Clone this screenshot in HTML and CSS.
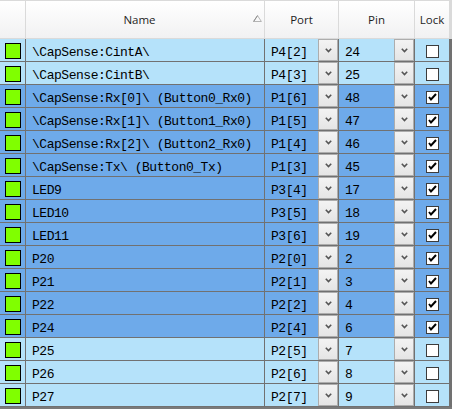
FILE: index.html
```html
<!DOCTYPE html>
<html>
<head>
<meta charset="utf-8">
<link rel="stylesheet" href="styles.css">
</head>
<body>
<div class="table">
  <div class="hdr">
    <div class="hc"></div>
    <div class="hc name"><span class="hl">Name</span><svg class="sort" width="9" height="7" viewBox="0 0 9 7"><polygon points="4.5,0.6 8.4,6.5 0.6,6.5" fill="none" stroke="#b4b4b4" stroke-width="1"/><line x1="4.5" y1="0.6" x2="0.6" y2="6.5" stroke="#8c8c8c" stroke-width="1"/></svg></div>
    <div class="hc">Port</div>
    <div class="hc">Pin</div>
    <div class="hc">Lock</div>
  </div>

  <div class="row light"><div class="c"><div class="sw"></div></div><div class="c nm">\CapSense:CintA\</div><div class="c sel"><span class="val">P4[2]</span><span class="dd"><svg width="7" height="5" viewBox="0 0 7 5"><polyline points="0.8,0.8 3.5,3.6 6.2,0.8" fill="none" stroke="#555" stroke-width="1.6"/></svg></span></div><div class="c sel"><span class="val">24</span><span class="dd"><svg width="7" height="5" viewBox="0 0 7 5"><polyline points="0.8,0.8 3.5,3.6 6.2,0.8" fill="none" stroke="#555" stroke-width="1.6"/></svg></span></div><div class="c lk"><span class="cb"></span></div></div>

  <div class="row light"><div class="c"><div class="sw"></div></div><div class="c nm">\CapSense:CintB\</div><div class="c sel"><span class="val">P4[3]</span><span class="dd"><svg width="7" height="5" viewBox="0 0 7 5"><polyline points="0.8,0.8 3.5,3.6 6.2,0.8" fill="none" stroke="#555" stroke-width="1.6"/></svg></span></div><div class="c sel"><span class="val">25</span><span class="dd"><svg width="7" height="5" viewBox="0 0 7 5"><polyline points="0.8,0.8 3.5,3.6 6.2,0.8" fill="none" stroke="#555" stroke-width="1.6"/></svg></span></div><div class="c lk"><span class="cb"></span></div></div>

  <div class="row dark"><div class="c"><div class="sw"></div></div><div class="c nm">\CapSense:Rx[0]\ (Button0_Rx0)</div><div class="c sel"><span class="val">P1[6]</span><span class="dd"><svg width="7" height="5" viewBox="0 0 7 5"><polyline points="0.8,0.8 3.5,3.6 6.2,0.8" fill="none" stroke="#555" stroke-width="1.6"/></svg></span></div><div class="c sel"><span class="val">48</span><span class="dd"><svg width="7" height="5" viewBox="0 0 7 5"><polyline points="0.8,0.8 3.5,3.6 6.2,0.8" fill="none" stroke="#555" stroke-width="1.6"/></svg></span></div><div class="c lk"><span class="cb"><svg width="11" height="11" viewBox="0 0 11 11"><polyline points="2,5 4,7.5 9,2" fill="none" stroke="#000" stroke-width="2"/></svg></span></div></div>

  <div class="row dark"><div class="c"><div class="sw"></div></div><div class="c nm">\CapSense:Rx[1]\ (Button1_Rx0)</div><div class="c sel"><span class="val">P1[5]</span><span class="dd"><svg width="7" height="5" viewBox="0 0 7 5"><polyline points="0.8,0.8 3.5,3.6 6.2,0.8" fill="none" stroke="#555" stroke-width="1.6"/></svg></span></div><div class="c sel"><span class="val">47</span><span class="dd"><svg width="7" height="5" viewBox="0 0 7 5"><polyline points="0.8,0.8 3.5,3.6 6.2,0.8" fill="none" stroke="#555" stroke-width="1.6"/></svg></span></div><div class="c lk"><span class="cb"><svg width="11" height="11" viewBox="0 0 11 11"><polyline points="2,5 4,7.5 9,2" fill="none" stroke="#000" stroke-width="2"/></svg></span></div></div>

  <div class="row dark"><div class="c"><div class="sw"></div></div><div class="c nm">\CapSense:Rx[2]\ (Button2_Rx0)</div><div class="c sel"><span class="val">P1[4]</span><span class="dd"><svg width="7" height="5" viewBox="0 0 7 5"><polyline points="0.8,0.8 3.5,3.6 6.2,0.8" fill="none" stroke="#555" stroke-width="1.6"/></svg></span></div><div class="c sel"><span class="val">46</span><span class="dd"><svg width="7" height="5" viewBox="0 0 7 5"><polyline points="0.8,0.8 3.5,3.6 6.2,0.8" fill="none" stroke="#555" stroke-width="1.6"/></svg></span></div><div class="c lk"><span class="cb"><svg width="11" height="11" viewBox="0 0 11 11"><polyline points="2,5 4,7.5 9,2" fill="none" stroke="#000" stroke-width="2"/></svg></span></div></div>

  <div class="row dark"><div class="c"><div class="sw"></div></div><div class="c nm">\CapSense:Tx\ (Button0_Tx)</div><div class="c sel"><span class="val">P1[3]</span><span class="dd"><svg width="7" height="5" viewBox="0 0 7 5"><polyline points="0.8,0.8 3.5,3.6 6.2,0.8" fill="none" stroke="#555" stroke-width="1.6"/></svg></span></div><div class="c sel"><span class="val">45</span><span class="dd"><svg width="7" height="5" viewBox="0 0 7 5"><polyline points="0.8,0.8 3.5,3.6 6.2,0.8" fill="none" stroke="#555" stroke-width="1.6"/></svg></span></div><div class="c lk"><span class="cb"><svg width="11" height="11" viewBox="0 0 11 11"><polyline points="2,5 4,7.5 9,2" fill="none" stroke="#000" stroke-width="2"/></svg></span></div></div>

  <div class="row dark"><div class="c"><div class="sw"></div></div><div class="c nm">LED9</div><div class="c sel"><span class="val">P3[4]</span><span class="dd"><svg width="7" height="5" viewBox="0 0 7 5"><polyline points="0.8,0.8 3.5,3.6 6.2,0.8" fill="none" stroke="#555" stroke-width="1.6"/></svg></span></div><div class="c sel"><span class="val">17</span><span class="dd"><svg width="7" height="5" viewBox="0 0 7 5"><polyline points="0.8,0.8 3.5,3.6 6.2,0.8" fill="none" stroke="#555" stroke-width="1.6"/></svg></span></div><div class="c lk"><span class="cb"><svg width="11" height="11" viewBox="0 0 11 11"><polyline points="2,5 4,7.5 9,2" fill="none" stroke="#000" stroke-width="2"/></svg></span></div></div>

  <div class="row dark"><div class="c"><div class="sw"></div></div><div class="c nm">LED10</div><div class="c sel"><span class="val">P3[5]</span><span class="dd"><svg width="7" height="5" viewBox="0 0 7 5"><polyline points="0.8,0.8 3.5,3.6 6.2,0.8" fill="none" stroke="#555" stroke-width="1.6"/></svg></span></div><div class="c sel"><span class="val">18</span><span class="dd"><svg width="7" height="5" viewBox="0 0 7 5"><polyline points="0.8,0.8 3.5,3.6 6.2,0.8" fill="none" stroke="#555" stroke-width="1.6"/></svg></span></div><div class="c lk"><span class="cb"><svg width="11" height="11" viewBox="0 0 11 11"><polyline points="2,5 4,7.5 9,2" fill="none" stroke="#000" stroke-width="2"/></svg></span></div></div>

  <div class="row dark"><div class="c"><div class="sw"></div></div><div class="c nm">LED11</div><div class="c sel"><span class="val">P3[6]</span><span class="dd"><svg width="7" height="5" viewBox="0 0 7 5"><polyline points="0.8,0.8 3.5,3.6 6.2,0.8" fill="none" stroke="#555" stroke-width="1.6"/></svg></span></div><div class="c sel"><span class="val">19</span><span class="dd"><svg width="7" height="5" viewBox="0 0 7 5"><polyline points="0.8,0.8 3.5,3.6 6.2,0.8" fill="none" stroke="#555" stroke-width="1.6"/></svg></span></div><div class="c lk"><span class="cb"><svg width="11" height="11" viewBox="0 0 11 11"><polyline points="2,5 4,7.5 9,2" fill="none" stroke="#000" stroke-width="2"/></svg></span></div></div>

  <div class="row dark"><div class="c"><div class="sw"></div></div><div class="c nm">P20</div><div class="c sel"><span class="val">P2[0]</span><span class="dd"><svg width="7" height="5" viewBox="0 0 7 5"><polyline points="0.8,0.8 3.5,3.6 6.2,0.8" fill="none" stroke="#555" stroke-width="1.6"/></svg></span></div><div class="c sel"><span class="val">2</span><span class="dd"><svg width="7" height="5" viewBox="0 0 7 5"><polyline points="0.8,0.8 3.5,3.6 6.2,0.8" fill="none" stroke="#555" stroke-width="1.6"/></svg></span></div><div class="c lk"><span class="cb"><svg width="11" height="11" viewBox="0 0 11 11"><polyline points="2,5 4,7.5 9,2" fill="none" stroke="#000" stroke-width="2"/></svg></span></div></div>

  <div class="row dark"><div class="c"><div class="sw"></div></div><div class="c nm">P21</div><div class="c sel"><span class="val">P2[1]</span><span class="dd"><svg width="7" height="5" viewBox="0 0 7 5"><polyline points="0.8,0.8 3.5,3.6 6.2,0.8" fill="none" stroke="#555" stroke-width="1.6"/></svg></span></div><div class="c sel"><span class="val">3</span><span class="dd"><svg width="7" height="5" viewBox="0 0 7 5"><polyline points="0.8,0.8 3.5,3.6 6.2,0.8" fill="none" stroke="#555" stroke-width="1.6"/></svg></span></div><div class="c lk"><span class="cb"><svg width="11" height="11" viewBox="0 0 11 11"><polyline points="2,5 4,7.5 9,2" fill="none" stroke="#000" stroke-width="2"/></svg></span></div></div>

  <div class="row dark"><div class="c"><div class="sw"></div></div><div class="c nm">P22</div><div class="c sel"><span class="val">P2[2]</span><span class="dd"><svg width="7" height="5" viewBox="0 0 7 5"><polyline points="0.8,0.8 3.5,3.6 6.2,0.8" fill="none" stroke="#555" stroke-width="1.6"/></svg></span></div><div class="c sel"><span class="val">4</span><span class="dd"><svg width="7" height="5" viewBox="0 0 7 5"><polyline points="0.8,0.8 3.5,3.6 6.2,0.8" fill="none" stroke="#555" stroke-width="1.6"/></svg></span></div><div class="c lk"><span class="cb"><svg width="11" height="11" viewBox="0 0 11 11"><polyline points="2,5 4,7.5 9,2" fill="none" stroke="#000" stroke-width="2"/></svg></span></div></div>

  <div class="row dark"><div class="c"><div class="sw"></div></div><div class="c nm">P24</div><div class="c sel"><span class="val">P2[4]</span><span class="dd"><svg width="7" height="5" viewBox="0 0 7 5"><polyline points="0.8,0.8 3.5,3.6 6.2,0.8" fill="none" stroke="#555" stroke-width="1.6"/></svg></span></div><div class="c sel"><span class="val">6</span><span class="dd"><svg width="7" height="5" viewBox="0 0 7 5"><polyline points="0.8,0.8 3.5,3.6 6.2,0.8" fill="none" stroke="#555" stroke-width="1.6"/></svg></span></div><div class="c lk"><span class="cb"><svg width="11" height="11" viewBox="0 0 11 11"><polyline points="2,5 4,7.5 9,2" fill="none" stroke="#000" stroke-width="2"/></svg></span></div></div>

  <div class="row light"><div class="c"><div class="sw"></div></div><div class="c nm">P25</div><div class="c sel"><span class="val">P2[5]</span><span class="dd"><svg width="7" height="5" viewBox="0 0 7 5"><polyline points="0.8,0.8 3.5,3.6 6.2,0.8" fill="none" stroke="#555" stroke-width="1.6"/></svg></span></div><div class="c sel"><span class="val">7</span><span class="dd"><svg width="7" height="5" viewBox="0 0 7 5"><polyline points="0.8,0.8 3.5,3.6 6.2,0.8" fill="none" stroke="#555" stroke-width="1.6"/></svg></span></div><div class="c lk"><span class="cb"></span></div></div>

  <div class="row light"><div class="c"><div class="sw"></div></div><div class="c nm">P26</div><div class="c sel"><span class="val">P2[6]</span><span class="dd"><svg width="7" height="5" viewBox="0 0 7 5"><polyline points="0.8,0.8 3.5,3.6 6.2,0.8" fill="none" stroke="#555" stroke-width="1.6"/></svg></span></div><div class="c sel"><span class="val">8</span><span class="dd"><svg width="7" height="5" viewBox="0 0 7 5"><polyline points="0.8,0.8 3.5,3.6 6.2,0.8" fill="none" stroke="#555" stroke-width="1.6"/></svg></span></div><div class="c lk"><span class="cb"></span></div></div>

  <div class="row light"><div class="c"><div class="sw"></div></div><div class="c nm">P27</div><div class="c sel"><span class="val">P2[7]</span><span class="dd"><svg width="7" height="5" viewBox="0 0 7 5"><polyline points="0.8,0.8 3.5,3.6 6.2,0.8" fill="none" stroke="#555" stroke-width="1.6"/></svg></span></div><div class="c sel"><span class="val">9</span><span class="dd"><svg width="7" height="5" viewBox="0 0 7 5"><polyline points="0.8,0.8 3.5,3.6 6.2,0.8" fill="none" stroke="#555" stroke-width="1.6"/></svg></span></div><div class="c lk"><span class="cb"></span></div></div>
</div>
</body>
</html>
```

FILE: styles.css
```css
html, body {
  margin: 0;
  padding: 0;
  background: #ffffff;
}

.table {
  width: 452px;
  background: #7a7a7a;
  padding-bottom: 2px;
  display: flex;
  flex-direction: column;
}

.hdr {
  display: grid;
  grid-template-columns: 25px 238px 73px 75px 34px;
  column-gap: 1px;
  height: 39px;
  box-sizing: border-box;
  padding: 1px 3px 1px 0;
  background: #dadada;
  border-top: 0;
}

.hc {
  background: linear-gradient(#ffffff, #f1f1f2);
  display: flex;
  align-items: center;
  justify-content: center;
  font-family: "Open Sans", "Noto Sans", sans-serif;
  font-size: 11.5px;
  color: #1e1e1e;
  padding-bottom: 1px;
}

.hc.name {
  justify-content: flex-start;
}

.hl {
  flex: 1;
  text-align: center;
}

.sort {
  margin-right: 2px;
  margin-top: -1px;
  display: block;
}

.row {
  display: grid;
  grid-template-columns: 25px 238px 73px 75px 34px;
  column-gap: 1px;
  height: 23px;
  box-sizing: border-box;
  padding: 0 3px 1px 0;
  background: #717171;
}

.light .c {
  background: #b5e2fa;
}

.dark .c {
  background: #6eaaea;
}

.c {
  height: 22px;
  box-sizing: border-box;
  font-family: "Liberation Mono", "Courier New", monospace;
  font-size: 13px;
  letter-spacing: -0.47px;
  color: #000;
  white-space: pre;
  overflow: hidden;
}

.sw {
  width: 16px;
  height: 16px;
  box-sizing: border-box;
  margin: 4px 0 0 5px;
  border: 1px solid #000;
  background: #80ff00;
}

.nm {
  padding: 6px 0 0 6px;
  line-height: 16px;
}

.sel {
  display: flex;
  align-items: flex-start;
}

.val {
  flex: 1;
  padding: 6px 0 0 6px;
  line-height: 16px;
}

.dd {
  width: 20px;
  height: 22px;
  box-sizing: border-box;
  border: 1px solid #adadad;
  background: linear-gradient(#f3f3f3, #e5e5e5);
  display: flex;
  align-items: center;
  justify-content: center;
  padding-top: 1px;
}

.dd svg {
  display: block;
}

.lk {
  display: flex;
  justify-content: center;
  align-items: flex-start;
}

.cb {
  margin-top: 6px;
  width: 13px;
  height: 13px;
  box-sizing: border-box;
  border: 1px solid #3c3c3c;
  background: #ffffff;
  display: flex;
  align-items: center;
  justify-content: center;
}

.cb svg {
  display: block;
}
```
